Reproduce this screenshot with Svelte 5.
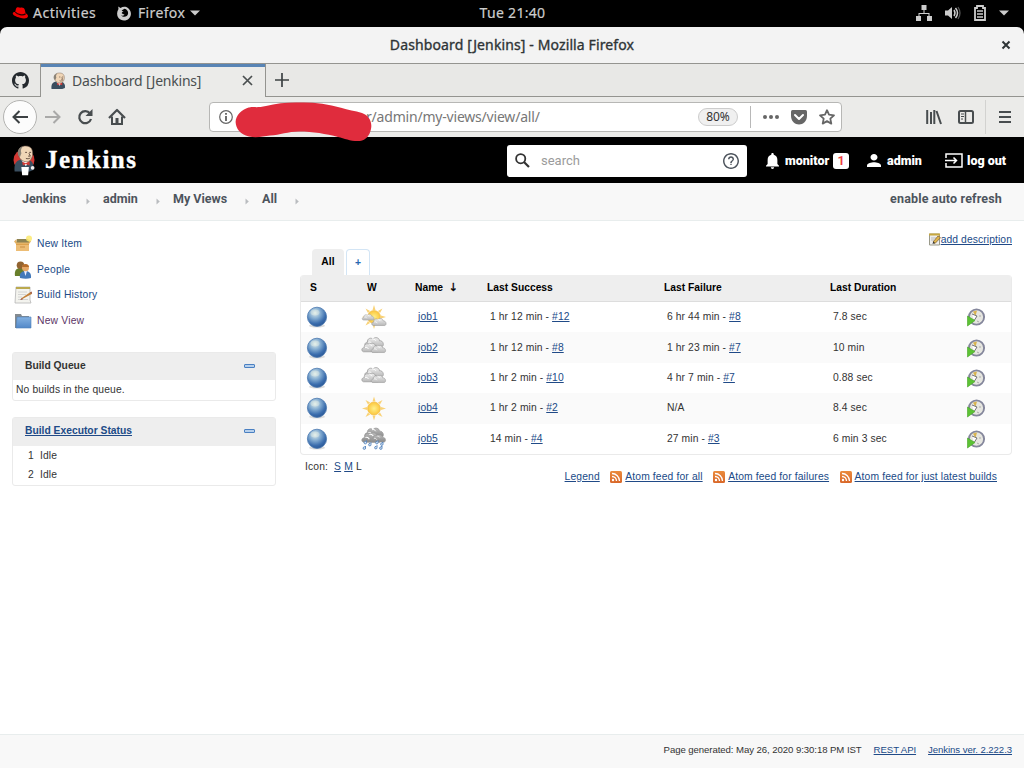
<script>
  const crumbs = [
    { label: 'Jenkins', width: 81 },
    { label: 'admin', width: 70 },
    { label: 'My Views', width: 89 },
    { label: 'All', width: 50 }
  ];
  const tasks = [
    { label: 'New Item', icon: 'package' },
    { label: 'People', icon: 'people' },
    { label: 'Build History', icon: 'history' },
    { label: 'New View', icon: 'folder', visited: true }
  ];
  const jobs = [
    { name: 'job1', weather: 'partly', ok: '1 hr 12 min', okNo: '#12', bad: '6 hr 44 min', badNo: '#8', dur: '7.8 sec' },
    { name: 'job2', weather: 'cloudy', ok: '1 hr 12 min', okNo: '#8', bad: '1 hr 23 min', badNo: '#7', dur: '10 min' },
    { name: 'job3', weather: 'cloudy', ok: '1 hr 2 min', okNo: '#10', bad: '4 hr 7 min', badNo: '#7', dur: '0.88 sec' },
    { name: 'job4', weather: 'sunny', ok: '1 hr 2 min', okNo: '#2', bad: 'N/A', badNo: '', dur: '8.4 sec' },
    { name: 'job5', weather: 'storm', ok: '14 min', okNo: '#4', bad: '27 min', badNo: '#3', dur: '6 min 3 sec' }
  ];
  const feeds = ['Atom feed for all', 'Atom feed for failures', 'Atom feed for just latest builds'];
  const rays = [0, 45, 90, 135, 180, 225, 270, 315];
</script>

{#snippet butler()}
  <path d="M2 34c-1-9 1-14 8-16h10c6 2 8 7 7 14l-5 2z" fill="#3a4f60" />
  <path d="M11 19l6 8 5-8z" fill="#fff" />
  <path d="M12 21l5 2 5-3v6l-5-2-4 2z" fill="#d33833" />
  <path d="M7 11C6 3 11 0 17 0c7 0 9 5 9 10 0 6-3 11-8 11-6 0-10-4-11-10z" fill="#f0d6b7" stroke="#6b5648" stroke-width=".8" />
  <path d="M9 15C4 11 6 2 13 .8c-3 3-3 6-2 9z" fill="#8a8378" />
  <path d="M16 8.500h2.500m3 0H24M21 9.500l2 4h-3m-3 3c2 1 4 .5 6-.5" fill="none" stroke="#5b463a" stroke-width="1.200" />
{/snippet}

{#snippet cloud(fill)}
  <path d="M3 19c-4-1-3-6 1-6-1-5 5-7 7-4 3-4 9-2 9 2 5-1 7 7 3 8z" fill={fill} stroke="#999" stroke-width="1" />
  <path d="M5 13c2-1 4 0 5 2m0-6c2-1 4 0 5 2" fill="none" stroke="#fff" stroke-width="1.3" />
{/snippet}

{#snippet sun()}
  {#each rays as a}
    <path d="M10.500 5L12 0l1.500 5z" fill="#f9d276" transform="rotate({a} 12 12)" />
  {/each}
  <circle cx="12" cy="12" r="6.4" fill="url(#sun)" stroke="#f4c04c" stroke-width=".8" />
{/snippet}

<svg class="defs" aria-hidden="true">
  <defs>
    <radialGradient id="ball" cx=".4" cy=".3" r=".7">
      <stop offset="0" stop-color="#e0ece9" /><stop offset=".4" stop-color="#86aed2" />
      <stop offset=".78" stop-color="#3c6eae" /><stop offset="1" stop-color="#2b5998" />
    </radialGradient>
    <radialGradient id="sun"><stop offset="0" stop-color="#fff08a" /><stop offset="1" stop-color="#fbc63c" /></radialGradient>
    <linearGradient id="grey" x2="0" y2="1"><stop offset="0" stop-color="#eee" /><stop offset="1" stop-color="#b8b8b8" /></linearGradient>
    <linearGradient id="dark" x2="0" y2="1"><stop offset="0" stop-color="#bbb" /><stop offset="1" stop-color="#888" /></linearGradient>
    <linearGradient id="rss" x2="0" y2="1"><stop offset="0" stop-color="#eb8b3d" /><stop offset="1" stop-color="#d9682a" /></linearGradient>
    <linearGradient id="fold" x2="0" y2="1"><stop offset="0" stop-color="#84b2e2" /><stop offset="1" stop-color="#5288c8" /></linearGradient>
  </defs>
</svg>

<div class="screen">
  <header class="gnome">
    <div class="g-left">
      <svg width="17" height="12" viewBox="0 0 17 12"><path d="M4 1.8C5-.5 7 .5 8.200.8c2-.8 4 0 4.600 2l.8 3.400C15 6.800 16 8 16 9.200c-.5 2.600-4.500 2.600-8 1.500C4 9.700.5 8 .8 6.200 1 5 2 5 3.200 5z" fill="#e00" /><path d="M3.300 5C5 7.400 11 9.200 13.600 6.700" stroke="#200" stroke-width="1.200" fill="none" /></svg>
      <span class="act">Activities</span>
      <svg class="fx" width="14" height="15" viewBox="0 0 14 15"><path fill="#ccc" d="M1.500 3L1.200.6 3.500 2C6 .2 9 .3 11 2c3.500 2.800 4 7.500 1 10.500-3 3-8 2.500-10.500-.5C-.4 9.500-.3 5.800 1.500 3z" /><path d="M4.600 4.600L7.500 2.800c2.300.4 3.900 2.400 3.600 4.700-.4 3.200-4.600 4.500-7 2 1.400.3 2.600.1 3.500-.7L5 7.500c-.8-1 .3-1.600 1.600-1.500z" fill="#000" /></svg>
      <span class="ff">Firefox</span>
      <svg width="10" height="6" viewBox="0 0 10 6"><path d="M0 .5h10L5 5.500z" fill="#ccc" /></svg>
    </div>
    <div class="clock">Tue 21:40</div>
    <div class="g-right">
      <svg width="16" height="16" viewBox="0 0 16 16" fill="#ccc"><path d="M5.500 0h5v5h-5zM0 11h5v5H0zM11 11h5v5h-5zM7.500 5h1v3h5v3h-1V9h-9v2h-1V8h5z" /></svg>
      <svg width="16" height="14" viewBox="0 0 16 14"><path d="M0 4.500h3L7 1v12L3 9.500H0z" fill="#ccc" /><path d="M9 4q2 3 0 6M10.500 2q4 5 0 10" stroke="#ccc" stroke-width="1.500" fill="none" /><path d="M13 1q4 6 0 12" stroke="#555" stroke-width="1.300" fill="none" /></svg>
      <svg width="12" height="16" viewBox="0 0 12 16"><path d="M1 3h2V1h6v2h2v12H1z" fill="none" stroke="#ccc" stroke-width="1.800" /><path d="M3 6h6M3 9h6M3 12h6" stroke="#ccc" stroke-width="1.500" /></svg>
      <svg width="10" height="6" viewBox="0 0 10 6"><path d="M0 .5h10L5 5.500z" fill="#ccc" /></svg>
    </div>
  </header>

  <div class="browser">
    <div class="titlebar">
      <span>Dashboard [Jenkins] - Mozilla Firefox</span>
      <svg width="10" height="10" viewBox="0 0 10 10"><path d="M1.500 1.500l7 7m0-7l-7 7" stroke="#2e3436" stroke-width="2" /></svg>
    </div>
    <div class="tabs">
      <div class="pinned">
        <svg width="17" height="17" viewBox="0 0 16 16"><path fill="#24292e" d="M8 0C3.580 0 0 3.580 0 8c0 3.540 2.290 6.530 5.470 7.590.4.070.55-.17.55-.38 0-.19-.01-.82-.01-1.490-2.010.37-2.530-.49-2.690-.94-.09-.23-.48-.94-.82-1.130-.28-.15-.68-.52-.01-.53.63-.01 1.080.58 1.230.82.72 1.210 1.870.87 2.330.66.070-.52.28-.87.51-1.070-1.780-.2-3.640-.89-3.640-3.950 0-.87.31-1.590.82-2.150-.08-.2-.36-1.020.08-2.120 0 0 .67-.21 2.200.82.64-.18 1.320-.27 2-.27s1.360.09 2 .27c1.530-1.040 2.200-.82 2.200-.82.44 1.100.16 1.920.08 2.120.51.56.82 1.270.82 2.150 0 3.070-1.870 3.750-3.650 3.950.29.25.54.73.54 1.480 0 1.070-.01 1.930-.01 2.200 0 .21.15.46.55.38A8.010 8.010 0 0016 8c0-4.420-3.580-8-8-8z" /></svg>
      </div>
      <div class="tab">
        <svg width="15" height="16" viewBox="1 0 28 34" preserveAspectRatio="none">{@render butler()}</svg>
        <span>Dashboard [Jenkins]</span>
        <svg class="tclose" width="11" height="11" viewBox="0 0 11 11"><path d="M1 1l9 9m0-9l-9 9" stroke="#4a4f50" stroke-width="1.700" /></svg>
      </div>
      <div class="plus"><svg width="14" height="14" viewBox="0 0 14 14"><path d="M7 0v14M0 7h14" stroke="#3c4143" stroke-width="1.700" /></svg></div>
    </div>
    <div class="nav">
      <div class="back"><svg width="16" height="14" viewBox="0 0 16 14"><path d="M7.500 1L1.500 7l6 6M2 7h14" fill="none" stroke="#3c4143" stroke-width="2" /></svg></div>
      <svg class="fwd" width="16" height="14" viewBox="0 0 16 14"><path d="M8.500 1l6 6-6 6M0 7h14" fill="none" stroke="#a9a9a8" stroke-width="2" /></svg>
      <svg class="reload" width="16" height="16" viewBox="0 0 16 16"><path d="M13 4.500A6 6 0 1 0 14 10" fill="none" stroke="#484d4f" stroke-width="2.200" /><path d="M15.500 0v7h-7z" fill="#484d4f" /></svg>
      <svg class="home" width="16" height="16" viewBox="0 0 16 16"><path d="M0 9l8-8 8 8" fill="none" stroke="#484d4f" stroke-width="2.200" stroke-linejoin="round" /><path d="M3 7.500V15h10V7.500" fill="none" stroke="#484d4f" stroke-width="2" /><path d="M6.500 15V9h3v6z" fill="#484d4f" /></svg>
      <div class="url">
        <svg width="14" height="14" viewBox="0 0 14 14"><circle cx="7" cy="7" r="6.300" fill="none" stroke="#666" stroke-width="1.200" /><path d="M7 6v5M7 3v1.700" stroke="#555" stroke-width="1.700" /></svg>
        <span class="address">r/admin/my-views/view/all/</span>
        <span class="zoom">80%</span>
        <i class="sep"></i>
        <svg width="16" height="4" viewBox="0 0 16 4" fill="#666"><circle cx="2" cy="2" r="2" /><circle cx="8" cy="2" r="2" /><circle cx="14" cy="2" r="2" /></svg>
        <svg class="pocket" width="16" height="15" viewBox="0 0 16 15"><path d="M1.500 0h13Q16 0 16 1.500V6c0 5-4 8.500-8 8.500S0 11 0 6V1.500Q0 0 1.500 0z" fill="#666" /><path d="M4 5l4 4 4-4" fill="none" stroke="#fff" stroke-width="2" stroke-linecap="round" stroke-linejoin="round" /></svg>
        <svg class="star" width="16" height="16" viewBox="0 0 16 16"><path d="M8 1.200l2 4.500 5 .6-3.700 3.300 1 5L8 12.100l-4.300 2.500 1-5L1 6.300l5-.6z" fill="none" stroke="#666" stroke-width="1.800" stroke-linejoin="round" /></svg>
      </div>
      <svg class="lib" width="16" height="16" viewBox="0 0 16 16"><path d="M1.200 1v14M5 3v12M8.300 1v14M10.500 2l4.500 13" fill="none" stroke="#484d4f" stroke-width="2" /></svg>
      <svg class="side" width="16" height="14" viewBox="0 0 16 14"><rect x="1" y="1" width="14" height="12" rx="1.500" fill="none" stroke="#484d4f" stroke-width="2" /><path d="M7.500 1v12" stroke="#484d4f" stroke-width="1.500" /><path d="M3 4h3M3 6.500h3M3 9h2" stroke="#484d4f" /></svg>
      <div class="burger"><svg width="12" height="12" viewBox="0 0 12 12"><path d="M0 1h12M0 6h12M0 11h12" stroke="#484d4f" stroke-width="2" /></svg></div>
    </div>
    <svg class="scribble" width="138" height="42" viewBox="235 101 138 42"><path d="M249 107.500C254 106.500 258 108 266 106 277 103 290 102 302 102.500c12-.2 26 1.500 39 5.200 7 2.500 14 3 21 5.300 7 2.500 10.500 9 9 16-1.500 7-5 11-11 12-9 .6-15-2.500-22-4-12-3-26-5.500-39-5.400-11 .1-19 3.400-29 4-7 .7-13 2.800-21 1-9-2-13-8-13.400-14.500.2-7 6-12.500 13-14.600z" fill="#e02c3d" /></svg>
  </div>

  <div class="jhead">
    <svg class="logo" width="22" height="30" viewBox="0 0 29 40"><circle cx="14.500" cy="18.500" r="14" fill="#d33833" />{@render butler()}<path d="M11 28h10l-1 11h-8z" fill="#fff" /><circle cx="26" cy="29" r="2.500" fill="#eee" /></svg>
    <span class="brand">Jenkins</span>
    <div class="search">
      <svg width="15" height="15" viewBox="0 0 15 15"><circle cx="5.700" cy="5.700" r="4.600" fill="none" stroke="#333" stroke-width="1.800" /><path d="M9 9l5 5" stroke="#333" stroke-width="2.200" /></svg>
      <span>search</span>
      <svg width="16" height="16" viewBox="0 0 24 24"><path fill="#4d545d" d="M11 18h2v-2h-2v2zm1-18C5.400 0 0 5.400 0 12s5.400 12 12 12 12-5.400 12-12S18.600 0 12 0zm0 21.800c-5.400 0-9.800-4.400-9.800-9.800S6.600 2.200 12 2.200s9.800 4.400 9.800 9.800-4.400 9.800-9.800 9.800zM12 5c-2.500 0-4.500 2-4.500 4.500h2.200a2.300 2.300 0 014.600 0c0 2.300-3.400 2-3.400 5.500h2.200c0-2.500 3.400-2.900 3.400-5.500C16.500 7 14.500 5 12 5z" /></svg>
    </div>
    <svg class="bell" width="13" height="16" viewBox="4 2.500 16 19.500"><path fill="#fff" d="M12 22c1.100 0 2-.9 2-2h-4c0 1.100.9 2 2 2zm6-6v-5c0-3.070-1.640-5.640-4.500-6.320V4c0-.83-.67-1.500-1.500-1.500s-1.500.67-1.500 1.500v.68C7.630 5.360 6 7.920 6 11v5l-2 2v1h16v-1z" /></svg>
    <b class="mon">monitor</b><span class="badge">1</span>
    <svg class="person" width="14" height="13" viewBox="4 4 16 16" preserveAspectRatio="none"><path fill="#fff" d="M12 12c2.210 0 4-1.790 4-4s-1.790-4-4-4-4 1.790-4 4 1.790 4 4 4zm0 2c-2.670 0-8 1.340-8 4v2h16v-2c0-2.660-5.330-4-8-4z" /></svg>
    <b class="adm">admin</b>
    <svg class="exit" width="18" height="15" viewBox="0 0 18 15"><path d="M1 5V1h16v13H1v-4M0 7.500h11M8.500 4.500l3 3-3 3" fill="none" stroke="#fff" stroke-width="1.500" /></svg>
    <b class="out">log out</b>
  </div>

  <nav class="crumbs">
    {#each crumbs as c}
      <span class="crumb" style="width: {c.width}px">{c.label}<svg width="4" height="7" viewBox="0 0 4 7"><path d="M.5 .5v6L3.800 3.500z" fill="#b9bcbf" /></svg></span>
    {/each}
    <span class="refresh">enable auto refresh</span>
  </nav>

  <div class="page">
    <aside>
      <div class="tasks">
        {#each tasks as t}
          <div class="task" class:visited={t.visited}>
            <svg width="18" height="18" viewBox="0 0 18 18">
              {#if t.icon === 'package'}
                <path d="M2 7h13v9H2z" fill="#dda24e" /><path d="M2 10h13v6H2z" fill="#edbd75" /><path d="M3 4h11l2 4H2z" fill="#8c8252" /><path d="M2.500 4L0 6.500 2 9h13l2-2.500L14.500 4 15 7.500H2.500z" fill="#e5b366" /><circle cx="15" cy="3.500" r="3" fill="#fbe96f" opacity=".85" /><path d="M6 12h5" stroke="#c88d42" />
              {:else if t.icon === 'people'}
                <path d="M1 15c-1-6 2-8 5-8s6 2 5 8z" fill="#687f2b" /><circle cx="6.500" cy="4.300" r="3.800" fill="#926330" /><path d="M6 17c-1-5 2-7 5.500-7s6 2 5.500 7q-5 1.500-11 0z" fill="#4379b9" /><path d="M10 10l1.500 5 1.500-5z" fill="#eef" /><circle cx="11.500" cy="6.800" r="3.500" fill="#e6a765" /><path d="M8 6c0-4 7-4 7 0z" fill="#b66c29" />
              {:else if t.icon === 'history'}
                <path d="M2 1h14v13l1 3H1z" fill="#f3f3ee" stroke="#b5b5b5" stroke-width=".8" /><path d="M2 1h14v2H2z" fill="#bba94e" /><path d="M4 6h9M4 8.500h8M4 11h4M4 13.500h10" stroke="#ccc" stroke-width=".8" /><path d="M7 12.500L16.500 6l1.300 2-9.500 5z" fill="#c3813a" /><path d="M6 14l2-2 .8 1.400zM16.300 6.200l1.200-.7.600 1.800-1 .6z" fill="#954936" />
              {:else}
                <path d="M1 16V2h6l1 2h7v12z" fill="#848b90" /><path d="M3 5h14v11H2z" fill="url(#fold)" stroke="#4d7fb8" stroke-width=".6" />
              {/if}
            </svg>
            <a href="#top">{t.label}</a>
          </div>
        {/each}
      </div>
      <section class="pane queue">
        <h2><span>Build Queue</span><i></i></h2>
        <p>No builds in the queue.</p>
      </section>
      <section class="pane execs">
        <h2><a href="#top">Build Executor Status</a><i></i></h2>
        <p><span>1</span>Idle</p>
        <p><span>2</span>Idle</p>
      </section>
    </aside>

    <main>
      <div class="describe">
        <svg width="12" height="13" viewBox="0 0 12 13"><path d="M.5 1h10v11H.5z" fill="#eee" stroke="#9a9a8a" /><path d="M0 .5h11v2H0z" fill="#c8a83f" /><path d="M2 5h5M2 7h3" stroke="#bbb" /><path d="M4 9l5-6 2.500 1.700L6 10.500z" fill="#e0b54b" stroke="#755729" stroke-width=".7" /><path d="M3.500 11l.8-2.400 1.800 1.500z" fill="#333" /></svg><a href="#top">add description</a>
      </div>
      <div class="vtabs"><div class="on">All</div><div class="add">+</div></div>
      <div class="table">
        <div class="row head">
          <span class="hs">S</span><span class="hw">W</span><span>Name&nbsp; <em>↓</em></span><span>Last Success</span><span>Last Failure</span><span>Last Duration</span><span></span>
        </div>
        {#each jobs as j}
          <div class="row job">
            <svg class="ball" width="22" height="22" viewBox="0 0 22 22"><ellipse cx="11" cy="19.800" rx="8" ry="1.800" fill="#ddd" /><circle cx="11" cy="10.800" r="9.600" fill="url(#ball)" stroke="#4a78b0" stroke-width=".8" /><ellipse cx="9" cy="6.500" rx="4.500" ry="3" fill="#f4f8ec" opacity=".35" /></svg>
            <svg class="wx" width="25" height="23" viewBox="0 0 25 23">
              {#if j.weather === 'sunny'}
                <g transform="translate(1 -.5)">{@render sun()}</g>
              {:else if j.weather === 'partly'}
                <g transform="translate(1 -1)">{@render sun()}</g>
                <g transform="translate(1 5) scale(.48)">{@render cloud('url(#grey)')}</g>
                <g transform="translate(10.500 8.500) scale(.58)">{@render cloud('url(#grey)')}</g>
              {:else if j.weather === 'cloudy'}
                <g transform="translate(3.500 -3.500) scale(.75)">{@render cloud('url(#grey)')}</g>
                <g transform="translate(.5 2.500) scale(.7)">{@render cloud('url(#grey)')}</g>
                <g transform="translate(10 5.500) scale(.58)">{@render cloud('url(#grey)')}</g>
              {:else}
                <g transform="translate(3.500 -4) scale(.75)">{@render cloud('url(#dark)')}</g>
                <g transform="translate(.5 .5) scale(.78)">{@render cloud('url(#dark)')}</g>
                <g transform="translate(10 4) scale(.58)">{@render cloud('url(#dark)')}</g>
                <g fill="#dce9f8" stroke="#5684bd" stroke-width=".9"><path d="M5.500 13.500v2a1.200 1.200 0 1 1-1-1zM10 15.500v2a1.200 1.200 0 1 1-1-1zM17 13.500v2a1.200 1.200 0 1 1-1-1zM22 15v2a1.200 1.200 0 1 1-1-1zM4.500 19v2a1.200 1.200 0 1 1-1-1zM16 18.500v2a1.200 1.200 0 1 1-1-1zM21 19v2a1.200 1.200 0 1 1-1-1z" /></g>
              {/if}
            </svg>
            <span><a href="#top">{j.name}</a></span>
            <span>{j.ok} - <a href="#top">{j.okNo}</a></span>
            <span>{j.bad}{#if j.badNo}{' - '}<a href="#top">{j.badNo}</a>{/if}</span>
            <span>{j.dur}</span>
            <svg class="run" width="20" height="20" viewBox="0 0 20 20"><circle cx="10.500" cy="10" r="7.600" fill="#e6e6e0" stroke="#85879c" stroke-width="1.900" /><path d="M9.500 9L7 4.500 11 3.500z" fill="#d9b34e" /><path d="M6 7l5 2-3 4z" fill="#fff" /><path d="M6 7l5 2-2.500 4" fill="none" stroke="#666" stroke-width=".9" /><path d="M13 9h2M11 14l2 1" stroke="#aaa" /><path d="M1.500 9L9 13.500 1.500 19z" fill="#5cc234" stroke="#44a323" stroke-width=".6" /></svg>
          </div>
        {/each}
      </div>
      <div class="sizes">Icon: &nbsp;<a href="#top">S</a> <a href="#top">M</a> L</div>
      <div class="feeds">
        <a href="#top">Legend</a>
        {#each feeds as f}
          <span class="feed"><svg width="12" height="12" viewBox="0 0 12 12"><rect width="12" height="12" rx="1.500" fill="url(#rss)" /><circle cx="3" cy="9" r="1.200" fill="#fff" /><path d="M2 5.500A4.500 4.500 0 0 1 6.500 10M2 2.500A7.500 7.500 0 0 1 9.500 10" fill="none" stroke="#fff" stroke-width="1.300" /></svg><a href="#top">{f}</a></span>
        {/each}
      </div>
    </main>
  </div>

  <footer><span>Page generated: May 26, 2020 9:30:18 PM IST</span><a href="#top">REST API</a><a href="#top">Jenkins ver. 2.222.3</a></footer>
</div>

<style>
  :global(body) { margin: 0; }
  * { box-sizing: border-box; }
  svg { display: block; flex: none; overflow: visible; }
  .defs { position: absolute; width: 0; height: 0; }
  .screen { width: 1024px; height: 768px; display: flex; flex-direction: column; overflow: hidden; background: #fff; color: #333; font: 10.3px/14px "Liberation Sans", sans-serif; white-space: nowrap; }
  a { color: #204a87; text-decoration: underline; }

  .gnome { height: 27px; flex: none; background: #000; color: #ccc; display: grid; grid-template-columns: 1fr auto 1fr; align-items: center; padding: 0 15px 2px 12px; font: 14px/25px "Noto Sans", sans-serif; -webkit-text-stroke: .2px #ccc; }
  .g-left, .g-right { display: flex; align-items: center; }
  .act { margin-left: 4px; width: 84px; letter-spacing: .5px; }
  .fx { margin-top: 2px; }
  .ff { margin: 0 5px 0 7px; width: 47px; letter-spacing: .35px; }
  .clock { letter-spacing: .3px; padding-left: 4px; }
  .g-right { justify-content: flex-end; gap: 13px; }

  .browser { height: 111px; flex: none; position: relative; background: #000; font-family: "Noto Sans", sans-serif; }
  .titlebar { height: 37px; background: #f3f3f3; border-bottom: 1px solid #949490; border-radius: 7px 7px 0 0; display: grid; grid-template-columns: 1fr auto 1fr; align-items: center; padding: 0 13px; font-size: 14px; color: #2e3436; letter-spacing: .12px; -webkit-text-stroke: .35px #2e3436; }
  .titlebar span { grid-column: 2; }
  .titlebar svg { justify-self: end; }
  .tabs { height: 33px; display: flex; background: #e8e8e6; }
  .pinned { width: 40px; display: grid; place-items: center; border-bottom: 1px solid #949490; }
  .tab { width: 226px; display: flex; align-items: center; padding: 0 12px 0 10px; border: solid #949490; border-width: 0 1px; box-shadow: inset 0 3px #5884b5; background: #ebebe9; font-size: 14px; color: #4a4f50; letter-spacing: -.22px; }
  .tab span { margin-left: 6px; }
  .tclose { margin-left: auto; }
  .plus { flex: 1; padding: 9px 9px; border-bottom: 1px solid #949490; }
  .nav { height: 40px; display: flex; align-items: center; background: #ebebe9; padding-left: 3px; }
  .back { width: 34px; height: 34px; border: 1px solid #b3b3b1; border-radius: 50%; background: #fcfcfc; display: grid; place-items: center; }
  .fwd { margin-left: 8px; }
  .reload { margin-left: 16px; }
  .home { margin-left: 16px; }
  .url { margin-left: 84px; width: 633px; height: 30px; border: 1px solid #b7b7b5; border-radius: 4px; background: #fff; display: flex; align-items: center; padding: 0 6px 0 9px; color: #777; font-size: 14px; }
  .address { margin-left: 133px; letter-spacing: -.2px; }
  .zoom { margin-left: auto; width: 40px; height: 18px; border: 1px solid #ccc; border-radius: 9px; background: #f0f0f0; color: #333; font-size: 12px; line-height: 16px; text-align: center; }
  .sep { width: 1px; height: 22px; background: #b8b8b8; margin: 0 12px; }
  .pocket { margin-left: 12px; }
  .star { margin-left: 12px; }
  .lib { margin-left: 84px; }
  .side { margin-left: 16px; }
  .burger { margin-left: 11px; border-left: 1px solid #d2d2d0; height: 34px; padding-left: 13px; display: flex; align-items: center; }
  .scribble { position: absolute; left: 235px; top: 74px; z-index: 2; }

  .jhead { height: 45px; flex: none; background: #000; color: #fff; display: flex; align-items: center; padding-left: 13px; font: 700 12.5px/18px Roboto, sans-serif; }
  .brand { margin-left: 10px; width: 462px; font: 700 25px/44px "Liberation Serif", serif; letter-spacing: 1.5px; -webkit-text-stroke: .4px #fff; padding-bottom: 1px; }
  .search { width: 240px; height: 32px; border-radius: 3px; background: #fff; display: flex; align-items: center; padding: 0 8px; color: #9b9b9b; font-weight: 400; font-size: 13px; }
  .search span { flex: 1; margin-left: 11px; }
  .bell { margin-left: 19px; }
  .mon { margin-left: 6px; width: 48px; }
  .badge { width: 16px; height: 16px; border-radius: 3px; background: #fff; color: #ef3d43; line-height: 16px; text-align: center; }
  .person { margin-left: 18px; }
  .adm { margin-left: 6px; width: 58px; }
  .out { margin-left: 4px; }

  .crumbs { height: 38px; flex: none; background: #f8f8f8; border-bottom: 1px solid #e8eded; display: flex; padding: 0 22px; color: #4d545d; font: 700 12.5px/32px Roboto, sans-serif; }
  .crumb { display: flex; justify-content: space-between; padding-right: 13px; }
  .crumb svg { margin-top: 15px; }
  .refresh { margin-left: auto; letter-spacing: .16px; }

  .page { flex: 1; display: flex; letter-spacing: .1px; }
  aside { width: 264px; margin-left: 12px; }
  .tasks { padding-top: 10px; height: 131px; }
  .task { height: 25.700px; display: flex; align-items: center; padding-left: 2px; letter-spacing: .2px; }
  .task a { margin-left: 5px; text-decoration: none; }
  .task.visited a { color: #5c3566; }
  .pane { border: 1px solid #eaeaea; border-radius: 3px; }
  .pane h2 { margin: 0; height: 27px; padding: 0 20px 1px 12px; background: #eee; display: flex; align-items: center; justify-content: space-between; font: 700 10.300px/14px "Liberation Sans", sans-serif; letter-spacing: 0; }
  .pane h2 i { width: 11px; height: 4px; border: 1px solid #4a80c2; border-radius: 1px; background: #b7d0ec; }
  .pane p { margin: 0; }
  .queue { height: 49px; }
  .queue p { padding: 3px 3px; letter-spacing: .15px; }
  .execs { height: 69px; margin-top: 16px; }
  .execs h2 { height: 28px; padding-bottom: 2px; }
  .execs p { height: 19px; line-height: 19px; padding-left: 15px; }
  .execs p span { display: inline-block; width: 12px; }

  main { width: 712px; margin-left: 24px; }
  .describe { height: 28px; padding-top: 12px; display: flex; justify-content: flex-end; align-items: flex-start; }
  .vtabs { height: 26px; display: flex; padding-left: 12px; gap: 2px; font-weight: 700; line-height: 26px; text-align: center; color: #000; }
  .on { width: 32px; background: #eee; border-radius: 4px 4px 0 0; }
  .add { width: 24px; border: 1px solid #d3e5f5; border-bottom: 0; border-radius: 4px 4px 0 0; color: #2868b1; }
  .table { height: 180px; border: 1px solid #eaeaea; border-top: 0; border-radius: 4px; overflow: hidden; }
  .row { display: grid; grid-template-columns: 60px 54px 72px 177px 166px 136px auto; align-items: center; }
  .head { height: 27px; background: #eee; border-bottom: 1px solid #ddd; color: #000; font-weight: 700; letter-spacing: 0; }
  .head em { font: 11px/10px "DejaVu Sans", sans-serif; -webkit-text-stroke: .3px #000; }
  .hs { padding-left: 9px; }
  .hw { padding-left: 6px; }
  .job { height: 30.400px; }
  .job:nth-child(odd) { background: #fafafa; }
  .job span { padding-left: 3px; }
  .ball { margin-left: 5px; }
  .sizes { padding: 5px 5px 0; height: 15px; letter-spacing: .15px; }
  .feeds { display: flex; justify-content: flex-end; padding-right: 15px; gap: 10.500px; letter-spacing: .14px; }
  .feed { display: flex; gap: 3px; }
  .feed svg { margin-top: 1px; }

  footer { height: 34px; flex: none; border-top: 1px solid #e8eded; background: #f8f8f8; display: flex; justify-content: flex-end; gap: 12px; padding-right: 12px; font-size: 9.600px; line-height: 30px; letter-spacing: -.07px; }
</style>
